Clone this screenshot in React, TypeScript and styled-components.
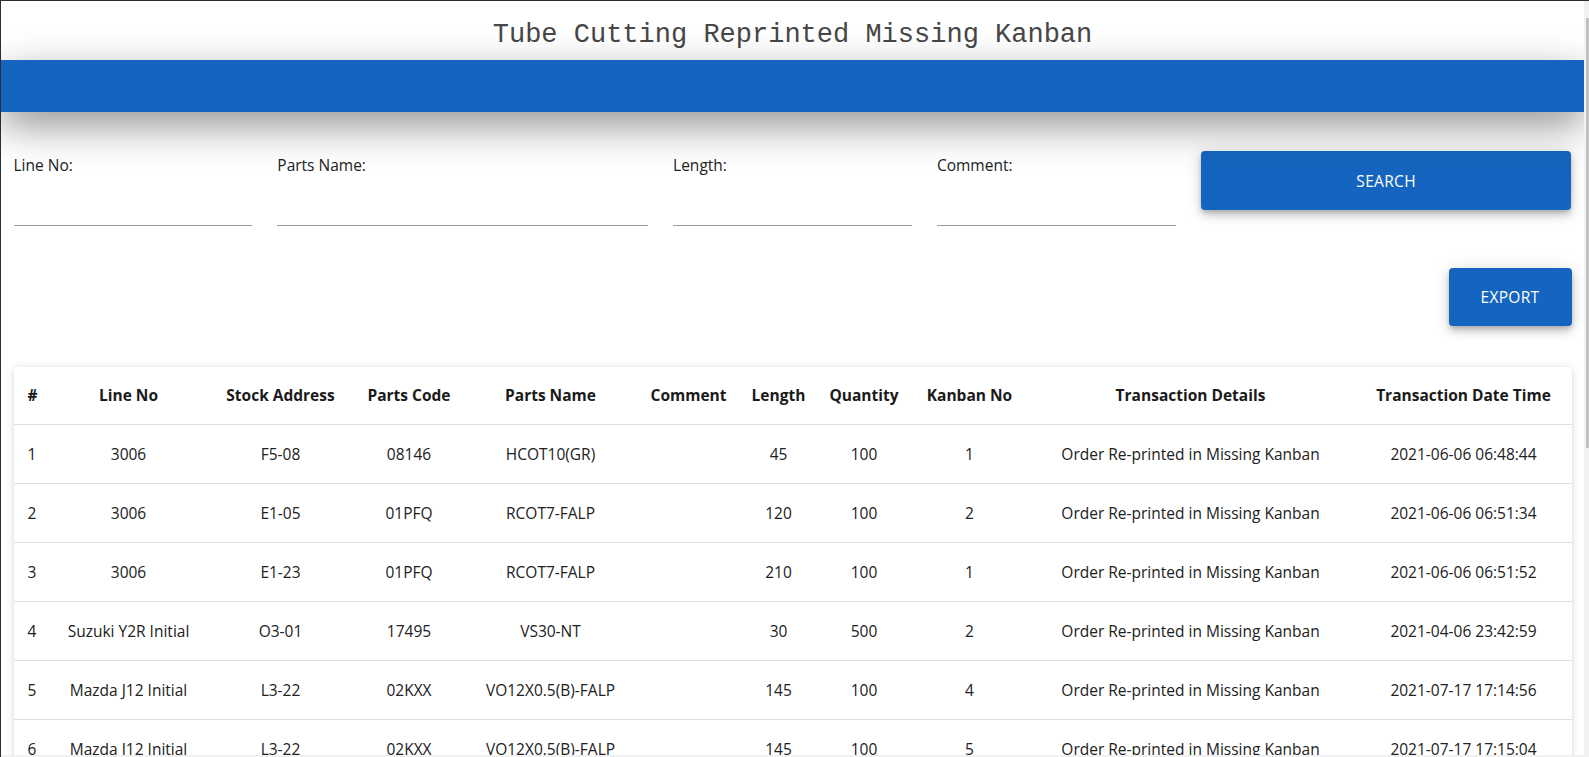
import React from "react";
import styled, { createGlobalStyle } from "styled-components";

type Row = {
  line: string;
  stock: string;
  code: string;
  name: string;
  comment: string;
  length: number;
  qty: number;
  kanban: number;
  details: string;
  date: string;
};

const rows: Row[] = [
  { line: "3006", stock: "F5-08", code: "08146", name: "HCOT10(GR)", comment: "", length: 45, qty: 100, kanban: 1, details: "Order Re-printed in Missing Kanban", date: "2021-06-06 06:48:44" },
  { line: "3006", stock: "E1-05", code: "01PFQ", name: "RCOT7-FALP", comment: "", length: 120, qty: 100, kanban: 2, details: "Order Re-printed in Missing Kanban", date: "2021-06-06 06:51:34" },
  { line: "3006", stock: "E1-23", code: "01PFQ", name: "RCOT7-FALP", comment: "", length: 210, qty: 100, kanban: 1, details: "Order Re-printed in Missing Kanban", date: "2021-06-06 06:51:52" },
  { line: "Suzuki Y2R Initial", stock: "O3-01", code: "17495", name: "VS30-NT", comment: "", length: 30, qty: 500, kanban: 2, details: "Order Re-printed in Missing Kanban", date: "2021-04-06 23:42:59" },
  { line: "Mazda J12 Initial", stock: "L3-22", code: "02KXX", name: "VO12X0.5(B)-FALP", comment: "", length: 145, qty: 100, kanban: 4, details: "Order Re-printed in Missing Kanban", date: "2021-07-17 17:14:56" },
  { line: "Mazda J12 Initial", stock: "L3-22", code: "02KXX", name: "VO12X0.5(B)-FALP", comment: "", length: 145, qty: 100, kanban: 5, details: "Order Re-printed in Missing Kanban", date: "2021-07-17 17:15:04" },
];

const columns = [
  { title: "#", width: 35 },
  { title: "Line No", width: 160 },
  { title: "Stock Address", width: 144 },
  { title: "Parts Code", width: 113 },
  { title: "Parts Name", width: 170 },
  { title: "Comment", width: 106 },
  { title: "Length", width: 74 },
  { title: "Quantity", width: 97 },
  { title: "Kanban No", width: 114 },
  { title: "Transaction Details", width: 328 },
  { title: "Transaction Date Time", width: 218 },
];

const GlobalStyle = createGlobalStyle`
  html, body {
    margin: 0;
    height: 100%;
    overflow: hidden;
  }
  body {
    border-top: 1px solid #2b2e37;
    border-left: 1px solid #2b2e37;
    font-family: "Open Sans", "Noto Sans", sans-serif;
    background: #fff;
  }
  *, *::before, *::after {
    box-sizing: border-box;
  }
`;

const App: React.FC = () => {
  return (
    <>
      <GlobalStyle />
      <Frame>
        <Page>
          <TitleBar>Tube Cutting Reprinted Missing Kanban</TitleBar>
          <BlueBar />
          <FormRow>
            <Col $span={2}>
              <FieldLabel>Line No:</FieldLabel>
              <FieldInput />
            </Col>
            <Col $span={3}>
              <FieldLabel>Parts Name:</FieldLabel>
              <FieldInput />
            </Col>
            <Col $span={2}>
              <FieldLabel>Length:</FieldLabel>
              <FieldInput />
            </Col>
            <Col $span={2}>
              <FieldLabel>Comment:</FieldLabel>
              <FieldInput />
            </Col>
            <Col $span={3}>
              <BlueButton $wide>Search</BlueButton>
            </Col>
          </FormRow>
          <ExportRow>
            <BlueButton>Export</BlueButton>
          </ExportRow>
          <Card>
            <Table>
              <colgroup>
                {columns.map((c) => (
                  <col key={c.title} style={{ width: c.width }} />
                ))}
              </colgroup>
              <thead>
                <tr>
                  {columns.map((c, i) => (
                    <Th key={c.title} $left={i === 0}>
                      {c.title}
                    </Th>
                  ))}
                </tr>
              </thead>
              <tbody>
                {rows.map((r, i) => (
                  <tr key={i}>
                    <Td $left>{i + 1}</Td>
                    <Td>{r.line}</Td>
                    <Td>{r.stock}</Td>
                    <Td>{r.code}</Td>
                    <Td>{r.name}</Td>
                    <Td>{r.comment}</Td>
                    <Td>{r.length}</Td>
                    <Td>{r.qty}</Td>
                    <Td>{r.kanban}</Td>
                    <Td>{r.details}</Td>
                    <Td>{r.date}</Td>
                  </tr>
                ))}
              </tbody>
            </Table>
          </Card>
        </Page>
        <ScrollTrack>
          <ScrollThumb />
        </ScrollTrack>
        <BottomTrack />
      </Frame>
    </>
  );
};

const Frame = styled.div`
  display: grid;
  grid-template-columns: 1fr 5px;
  grid-template-rows: 1fr 2px;
  height: calc(100vh - 1px);
`;

const Page = styled.div`
  overflow: hidden;
  min-width: 0;
`;

const ScrollTrack = styled.div`
  background: #f1f1f1;
  padding: 17px 0 0 2px;
`;

const ScrollThumb = styled.div`
  height: 430px;
  background: #c1c1c1;
`;

const BottomTrack = styled.div`
  grid-column: 1 / span 2;
  background: #f1f1f1;
`;

const TitleBar = styled.div`
  height: 59px;
  display: flex;
  align-items: center;
  justify-content: center;
  padding-top: 8px;
  font-family: "Liberation Mono", "Courier New", monospace;
  font-size: 27px;
  color: #474747;
`;

const BlueBar = styled.div`
  position: relative;
  z-index: 1;
  height: 52px;
  background: #1565c0;
  box-shadow: 0 14px 40px rgba(0, 0, 0, 0.42);
`;

const FormRow = styled.div`
  display: flex;
  align-items: flex-start;
  padding-top: 39px;
`;

const Col = styled.div<{ $span: number }>`
  flex: 0 0 ${(p) => (p.$span / 12) * 100}%;
  max-width: ${(p) => (p.$span / 12) * 100}%;
  padding: 0 12.5px;
`;

const FieldLabel = styled.label`
  display: block;
  margin-top: 4px;
  font-size: 15.5px;
  line-height: 20px;
  color: #222;
`;

const FieldInput = styled.input`
  display: block;
  width: 100%;
  height: 51px;
  padding: 0;
  border: 0;
  border-bottom: 1px solid #9e9e9e;
  background: transparent;
  outline: none;
  font: inherit;
`;

const BlueButton = styled.button<{ $wide?: boolean }>`
  width: ${(p) => (p.$wide ? "100%" : "123px")};
  height: ${(p) => (p.$wide ? "59px" : "58px")};
  border: 0;
  border-radius: 4px;
  background: #1565c0;
  color: #fff;
  font-family: "Open Sans", "Noto Sans", sans-serif;
  font-size: 15.5px;
  font-weight: 400;
  text-transform: uppercase;
  letter-spacing: 0.02em;
  box-shadow: 0 3px 5px -1px rgba(0, 0, 0, 0.2), 0 6px 10px 0 rgba(0, 0, 0, 0.14),
    0 1px 18px 0 rgba(0, 0, 0, 0.12);
  cursor: pointer;
`;

const ExportRow = styled.div`
  display: flex;
  justify-content: flex-end;
  padding: 0 12.5px;
  margin-top: 42px;
`;

const Card = styled.div`
  margin: 41px 12.5px 0;
  background: #fff;
  border-radius: 4px;
  box-shadow: 0 1px 8px rgba(0, 0, 0, 0.14), 0 1px 2px rgba(0, 0, 0, 0.08);
  overflow: hidden;
`;

const Table = styled.table`
  width: 100%;
  table-layout: fixed;
  border-collapse: separate;
  border-spacing: 0;
  font-size: 15.5px;
`;

const Th = styled.th<{ $left?: boolean }>`
  padding: ${(p) => (p.$left ? "16px 0 16px 14px" : "16px 4px")};
  line-height: 25px;
  font-weight: 700;
  color: #1a1a1a;
  text-align: ${(p) => (p.$left ? "left" : "center")};
  white-space: nowrap;
  border-bottom: 1px solid #e0e0e0;
`;

const Td = styled.td<{ $left?: boolean }>`
  padding: ${(p) => (p.$left ? "16px 0 16px 14px" : "16px 4px")};
  line-height: 26px;
  color: #212121;
  text-align: ${(p) => (p.$left ? "left" : "center")};
  white-space: nowrap;
  border-bottom: 1px solid #e0e0e0;
`;

export default App;
